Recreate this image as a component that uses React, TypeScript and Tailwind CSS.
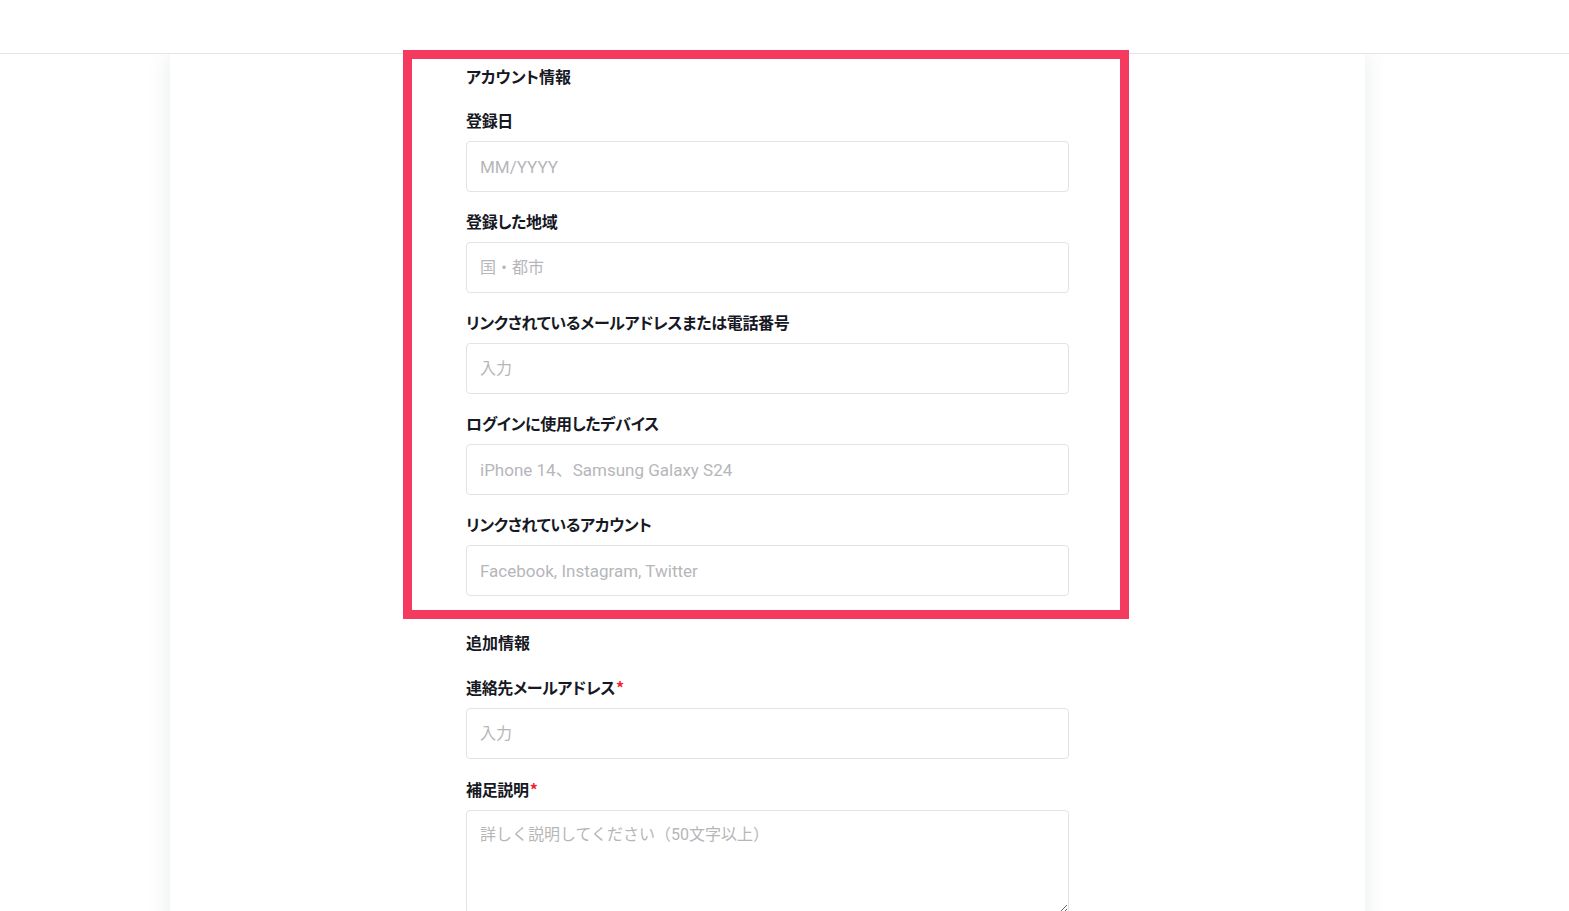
const labelFont = { fontFamily: '"Noto Sans CJK JP", "Noto Sans", sans-serif', fontFeatureSettings: '"palt"' };

type Field = {
  label: string;
  placeholder: string;
  required?: boolean;
  multiline?: boolean;
  latin?: boolean;
};

const accountFields: Field[] = [
  { label: "登録日", placeholder: "MM/YYYY", latin: true },
  { label: "登録した地域", placeholder: "国・都市" },
  { label: "リンクされているメールアドレスまたは電話番号", placeholder: "入力" },
  { label: "ログインに使用したデバイス", placeholder: "iPhone 14、Samsung Galaxy S24", latin: true },
  { label: "リンクされているアカウント", placeholder: "Facebook, Instagram, Twitter", latin: true },
];

const extraFields: Field[] = [
  { label: "連絡先メールアドレス", placeholder: "入力", required: true },
  { label: "補足説明", placeholder: "詳しく説明してください（50文字以上）", required: true, multiline: true },
];

function FormField({ field }: { field: Field }) {
  return (
    <div className="flex flex-col">
      <label
        className="text-[16px] leading-[24px] font-bold tracking-[-0.02em] text-[#161823] mb-[9px]"
        style={labelFont}
      >
        {field.label}
        {field.required && <span className="text-[#f5222d] ml-[1px]">*</span>}
      </label>
      {field.multiline ? (
        <textarea
          placeholder={field.placeholder}
          className="h-[104px] w-full rounded-[4px] border border-[#e3e3e4] bg-white px-[13px] py-[12px] text-[16px] leading-[24px] text-[#161823] placeholder:text-[#b6b6ba] outline-none font-['Roboto','Noto_Sans_CJK_JP',sans-serif]"
        />
      ) : (
        <input
          placeholder={field.placeholder}
          className={
            field.latin
              ? "h-[51px] w-full rounded-[4px] border border-[#e3e3e4] bg-white px-[13px] text-[17px] text-[#161823] placeholder:text-[#b6b6ba] outline-none font-['Roboto','Noto_Sans_CJK_JP',sans-serif]"
              : "h-[51px] w-full rounded-[4px] border border-[#e3e3e4] bg-white px-[13px] text-[16px] text-[#161823] placeholder:text-[#b6b6ba] outline-none font-['Roboto','Noto_Sans_CJK_JP',sans-serif]"
          }
        />
      )}
    </div>
  );
}

export default function App() {
  return (
    <div className="h-[911px] overflow-hidden bg-white">
      <header className="relative z-10 h-[54px] border-b border-[#e1e6e6] bg-white" />

      <div className="ml-[170px] w-[1195px] min-h-[900px] bg-white shadow-[0_0_22px_rgba(40,60,60,0.1)]">
        <div className="mx-auto w-[603px] pt-[10px]">
          {/* highlighted section */}
          <section className="relative">
            <h3 className="text-[16px] leading-[24px] font-bold text-[#161823] mb-[20px]" style={labelFont}>
              アカウント情報
            </h3>
            <div className="flex flex-col gap-[17px]">
              {accountFields.map((f) => (
                <FormField key={f.label} field={f} />
              ))}
            </div>
            <div className="pointer-events-none absolute left-[-63px] right-[-60px] top-[-14px] bottom-[-23px] z-20 border-[9px] border-[#f43a5e]" />
          </section>

          <section className="pt-[34px]">
            <h3 className="text-[16px] leading-[24px] font-bold text-[#161823] mb-[21px]" style={labelFont}>
              追加情報
            </h3>
            <div className="flex flex-col gap-[18px]">
              {extraFields.map((f) => (
                <FormField key={f.label} field={f} />
              ))}
            </div>
          </section>
        </div>
      </div>
    </div>
  );
}
